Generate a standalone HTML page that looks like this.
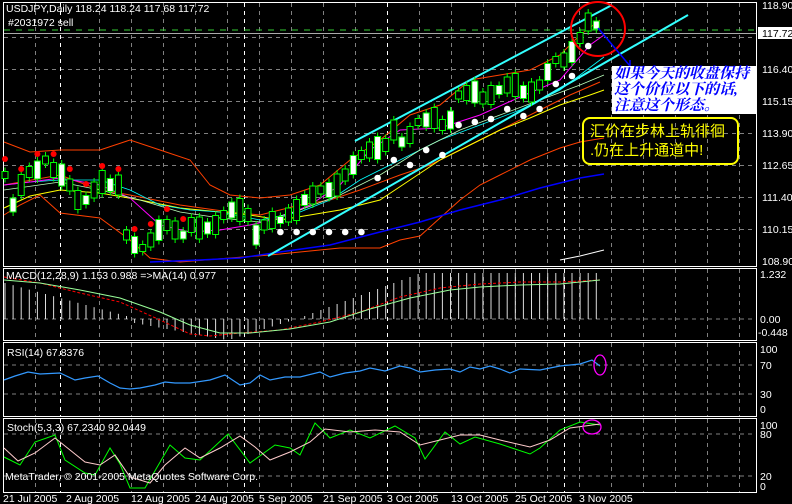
<!DOCTYPE html><html><head><meta charset="utf-8"><style>
body{margin:0;background:#000;width:792px;height:504px;overflow:hidden;font-family:"Liberation Sans",sans-serif}
svg{position:absolute;left:0;top:0}
.t{font-family:"Liberation Sans",sans-serif;font-size:10.5px;fill:#fff}
.box1{position:absolute;left:612px;top:66px;width:144px;height:48px;background:#fff;color:#0000ff;font:italic bold 15px/16px "Liberation Serif","Noto Serif CJK SC",serif;padding-left:2px;box-sizing:border-box}
.box2{position:absolute;left:582px;top:117px;width:157px;height:48px;border:2px solid #ff0;border-radius:8px;box-sizing:border-box;color:#ff0;font:15px/19px "Liberation Sans","WenQuanYi Zen Hei",sans-serif;padding:3px 0 0 6px}
</style></head><body>
<svg id="s" width="792" height="504" xmlns="http://www.w3.org/2000/svg">
<g fill="none">
<rect x="3.5" y="2.5" width="753" height="264" stroke="#fff"/>
<rect x="3.5" y="268.5" width="753" height="72" stroke="#fff"/>
<rect x="3.5" y="342.5" width="753" height="74" stroke="#fff"/>
<rect x="3.5" y="418.5" width="753" height="74" stroke="#fff"/>
<g id="grid" stroke="#808080" stroke-dasharray="4,4"></g>
<line x1="4" y1="30" x2="756" y2="30" stroke="#3c3" stroke-dasharray="6,6"/>
<line x1="4" y1="33.5" x2="756" y2="33.5" stroke="#aaa"/>
<polyline stroke="#ff4000" points="4,142 30,152 60,150 100,150 130,140 160,150 190,160 210,185 230,195 260,198 290,195 320,185 350,160 380,140 410,115 440,105 470,80 500,75 530,70 560,55 580,35 600,20"/>
<polyline stroke="#ff4000" points="4,215 20,205 40,195 60,213 100,218 130,240 150,258 180,262 230,258 270,255 300,252 340,248 380,248 400,240 420,236 440,218 460,200 480,185 500,175 530,160 560,148 580,142 604,138"/>
<polyline stroke="#ff4000" points="4,185 60,175 100,190 130,195 180,205 230,212 260,215 300,205 330,200 360,190 400,175 430,165 460,150 500,130 540,110 570,95 600,82"/>
<polyline stroke="#00f" stroke-width="1.5" points="150,262 200,260 240,258 280,252 330,245 380,232 420,222 460,210 500,200 540,188 580,178 604,174"/>
<polyline stroke="#ff0" points="4,208 30,196 60,190 100,193 140,200 180,208 220,212 250,215 280,220 310,215 340,210 380,200 410,180 440,160 470,145 500,130 530,118 560,105 590,95 604,90"/>
<polyline stroke="#0ff" stroke-width="0.8" points="4,185 30,182 60,180 100,180 130,190 160,205 190,210 220,212 260,220 300,212 330,200 360,180 400,160 440,140 480,125 520,110 560,90 604,57"/>
<polyline stroke="#f0f" points="4,185 30,182 60,178 100,185 130,198 160,225 190,232 220,230 250,225 280,218 310,205 340,185 370,150 400,130 440,128 480,115 520,97 560,80 590,45 604,35"/>
<polyline stroke="#bfb" stroke-width="0.8" points="4,190 60,182 100,190 140,200 180,212 220,218 260,222 300,210 340,195 380,175 420,150 460,130 500,115 540,100 580,85 604,75"/>
<polyline stroke="#fff" points="560,260 580,256 604,250"/>
<line x1="268" y1="256" x2="688" y2="15" stroke="#3ff" stroke-width="2"/>
<line x1="355" y1="141" x2="612" y2="5" stroke="#3ff" stroke-width="2"/>
<g id="c"></g>
<circle cx="598" cy="29" r="27" stroke="#f00" stroke-width="2"/>
<line x1="598" y1="28" x2="630" y2="66" stroke="#00f" stroke-width="1.5"/>
<line x1="630" y1="60" x2="630" y2="68" stroke="#00f" stroke-width="1.5"/>
<line x1="4" y1="319" x2="756" y2="319" stroke="#808080" stroke-dasharray="4,4"/>
<line x1="4" y1="365" x2="756" y2="365" stroke="#808080" stroke-dasharray="4,4"/>
<line x1="4" y1="394" x2="756" y2="394" stroke="#808080" stroke-dasharray="4,4"/>
<line x1="4" y1="434" x2="756" y2="434" stroke="#808080" stroke-dasharray="4,4"/>
<line x1="4" y1="476" x2="756" y2="476" stroke="#808080" stroke-dasharray="4,4"/>
<g id="macd" stroke="#ddd"></g>
<polyline stroke="#f00" stroke-dasharray="3,2" points="4,277 40,283 80,293 120,302 160,320 190,334 210,336 240,333 280,330 320,322 360,312 400,297 440,288 480,284 520,282 560,282 600,280"/>
<polyline stroke="#9f9" points="4,280 40,283 80,290 120,298 160,312 190,325 220,333 250,333 290,329 330,322 370,309 410,298 450,290 480,287 520,285 560,284 600,280"/>
<polyline stroke="#39f" stroke-width="1.2" points="4,380 15,376 28,372 40,374 60,373 75,380 85,378 98,376 110,383 120,388 130,389 140,388 155,385 165,382 175,383 190,383 210,380 225,375 240,385 250,383 260,375 270,380 285,377 300,377 320,372 330,377 345,373 360,371 370,368 385,371 400,366 410,368 420,372 435,370 450,369 460,372 470,367 480,369 490,366 500,369 510,373 520,369 540,370 560,366 580,364 592,360 600,366"/>
<polyline stroke="#0f0" points="4,457 20,465 35,442 55,435 65,460 85,473 95,475 110,448 120,464 130,488 145,488 170,445 185,458 200,460 228,434 250,463 275,445 290,448 300,455 315,423 330,438 350,430 370,438 395,426 415,438 425,459 445,432 460,444 475,437 500,444 530,454 540,448 560,430 580,422 600,425"/>
<polyline stroke="#fcc" points="4,448 18,461 35,453 55,438 70,450 85,462 100,465 115,455 130,477 150,483 165,465 185,448 200,458 220,448 240,436 255,447 270,460 290,452 310,442 325,429 350,432 375,430 400,432 420,445 440,440 460,435 480,435 500,440 530,447 550,440 570,428 600,424"/>
<ellipse cx="600" cy="365" rx="6" ry="10" stroke="#f0f" stroke-width="1.3"/>
<ellipse cx="592" cy="427" rx="9" ry="7" stroke="#f0f" stroke-width="1.3"/>
</g>
<g class="t">
<text x="6" y="12">USDJPY,Daily  118.24 118.24 117.68 117.72</text>
<text x="8" y="26">#2031972 sell</text>
<text x="762" y="9">118.90</text>
<rect x="758" y="27" width="34" height="12" fill="#fff"/>
<text x="762" y="37" fill="#000" style="fill:#000">117.72</text>
<text x="762" y="73">116.40</text><text x="762" y="105">115.15</text><text x="762" y="137">113.90</text><text x="762" y="169">112.65</text><text x="762" y="201">111.40</text><text x="762" y="233">110.15</text><text x="762" y="265">108.90</text>
<text x="6" y="279">MACD(12,28,9) 1.153 0.988  =&gt;MA(14) 0.977</text>
<text x="760" y="278">1.232</text><text x="760" y="323">0.00</text><text x="758" y="336">-0.448</text>
<text x="7" y="356">RSI(14) 67.8376</text>
<text x="760" y="353">100</text><text x="760" y="369">70</text><text x="760" y="398">30</text><text x="760" y="413">0</text>
<text x="7" y="431">Stoch(5,3,3) 67.2340 92.0449</text>
<text x="760" y="429">100</text><text x="760" y="438">80</text><text x="760" y="480">20</text><text x="760" y="490">0</text>
<text x="5" y="480">MetaTrader, © 2001-2005 MetaQuotes Software Corp.</text>
<text x="3" y="502">21 Jul 2005</text><text x="66" y="502">2 Aug 2005</text><text x="131" y="502">12 Aug 2005</text><text x="195" y="502">24 Aug 2005</text><text x="259" y="502">5 Sep 2005</text><text x="323" y="502">21 Sep 2005</text><text x="387" y="502">3 Oct 2005</text><text x="451" y="502">13 Oct 2005</text><text x="515" y="502">25 Oct 2005</text><text x="579" y="502">3 Nov 2005</text>
</g>
</svg>
<div class="box1">如果今天的收盘保持<br>这个价位以下的话,<br>注意这个形态。</div>
<div class="box2">汇价在步林上轨徘徊<br>.仍在上升通道中!</div>
<script>
var NS="http://www.w3.org/2000/svg";
function el(p,t,a){var e=document.createElementNS(NS,t);for(var k in a)e.setAttribute(k,a[k]);p.appendChild(e);return e}
var g=document.getElementById('grid');
[37,69,101,133,165,197,229].forEach(function(y){el(g,'line',{x1:4,y1:y+.5,x2:756,y2:y+.5})});
for(var x=35;x<756;x+=32){if(x==67)continue;el(g,'line',{x1:x+.5,y1:3,x2:x+.5,y2:266});el(g,'line',{x1:x+.5,y1:269,x2:x+.5,y2:340});el(g,'line',{x1:x+.5,y1:343,x2:x+.5,y2:416});el(g,'line',{x1:x+.5,y1:419,x2:x+.5,y2:492});}
[60,244,387,564].forEach(function(x){[[3,266],[269,340],[343,416],[419,492]].forEach(function(r){el(g,'line',{x1:x+.5,y1:r[0],x2:x+.5,y2:r[1],stroke:'#fff'})})});
var mid=[175,205,185,172,170,160,170,175,185,200,200,190,182,185,185,235,245,248,240,230,225,230,235,225,228,228,225,215,210,210,215,235,225,220,220,215,210,200,195,190,190,185,175,165,155,150,148,145,130,142,135,122,120,118,125,120,95,93,92,98,95,90,85,85,92,92,85,72,60,60,52,38,22,25];
var c=document.getElementById('c');
mid.forEach(function(m,i){var x=5+i*8.1,h=7+((i*7)%17),w=i%3==1;
el(c,'line',{x1:x,y1:m-h/2-4,x2:x,y2:m+h/2+4,stroke:'#0f0'});
el(c,'rect',{x:x-3,y:m-h/2,width:6,height:h,fill:w?'#fff':'#000',stroke:'#0f0'});
if(i<45){ if(i<24&&i%2==0) el(c,'circle',{cx:x,cy:m-16,r:3,fill:'#f00'}); }
else if(i%2==0) el(c,'circle',{cx:x,cy:m+24+(i<60?6:0),r:3.3,fill:'#fff'});
if(i>=34&&i<45&&i%2==0) el(c,'circle',{cx:x,cy:232,r:3.3,fill:'#fff'});
});
var mc=document.getElementById('macd');
for(var i=0;i<74;i++){var x=5+i*8.1,v;if(i<16)v=36-i*2.2;else if(i<28)v=-4-(i-16)*1.5;else if(i<36)v=-20+(i-28)*2.5;else v=Math.min(46,(i-36)*3);
el(mc,'line',{x1:x,y1:319,x2:x,y2:319-v});}
</script>
</body></html>
